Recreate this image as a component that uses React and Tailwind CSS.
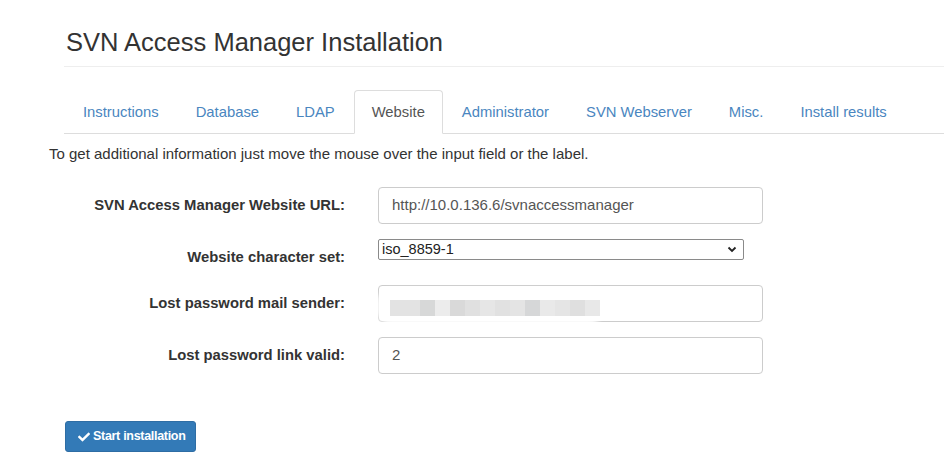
import React from "react";
import { FaCheck } from "react-icons/fa";

const tabs = ["Instructions", "Database", "LDAP", "Website", "Administrator", "SVN Webserver", "Misc.", "Install results"];

const blurBlocks = [
  ["w-[30px]", "bg-[#e3e3e3]"],
  ["w-[15px]", "bg-[#d7d8d8]"],
  ["w-[15px]", "bg-[#ececec]"],
  ["w-[15px]", "bg-[#d9d9d9]"],
  ["w-[15px]", "bg-[#e0e0e0]"],
  ["w-[15px]", "bg-[#e6e6e6]"],
  ["w-[15px]", "bg-[#e1e1e1]"],
  ["w-[15px]", "bg-[#e4e4e4]"],
  ["w-[15px]", "bg-[#d6d7d8]"],
  ["w-[15px]", "bg-[#e9e9e9]"],
  ["w-[15px]", "bg-[#e5e5e5]"],
  ["w-[15px]", "bg-[#dfdfdf]"],
  ["w-[15px]", "bg-[#e8e8e8]"],
];

function Label({ children }) {
  return (
    <div className="w-[345px] h-[37px] flex items-center justify-end text-[14.8px] font-bold text-[#333]">
      {children}
    </div>
  );
}

export default function App() {
  return (
    <div className="w-[944px] h-[475px] bg-white overflow-hidden text-[#333]" style={{ fontFamily: '"Liberation Sans", Arial, sans-serif' }}>
      <div className="pl-[64px] pt-[27px]">
        <h1 className="pl-[2px] text-[25.5px] leading-[30px] text-[#333] font-normal">SVN Access Manager Installation</h1>
        <div className="mt-[9px] h-px bg-[#eeeeee]" />
        <div className="mt-[23px] flex border-b border-[#dddddd] h-[44px]">
          {tabs.map((t) => (
            <div
              key={t}
              className={
                t === "Website"
                  ? "h-[44px] px-[17px] ml-[1px] pt-[1px] flex items-center text-[14.8px] text-[#555] bg-white border border-[#dddddd] border-b-white rounded-t-[4px]"
                  : "h-[43px] px-[18px] ml-[1px] pt-[2px] flex items-center text-[14.8px] text-[#4a86c0]"
              }
            >
              {t}
            </div>
          ))}
        </div>
      </div>
      <div className="pl-[49px] mt-[10px] text-[15px] leading-[20px] text-[#333]">
        To get additional information just move the mouse over the input field or the label.
      </div>

      <div className="mt-[23px] flex flex-col">
        <div className="flex">
          <Label>SVN Access Manager Website URL:</Label>
          <div className="ml-[33px] w-[385px] h-[37px] border border-[#cccccc] rounded-[4px] flex items-center pl-[13px] text-[15px] text-[#555]">
            http://10.0.136.6/svnaccessmanager
          </div>
        </div>

        <div className="flex mt-[15px]">
          <Label>Website character set:</Label>
          <div className="ml-[33px] w-[366px] h-[21px] border border-[#8a8a8a] rounded-[2px] flex items-center justify-between pl-[3px] pr-[6px] text-[14.5px] text-[#222]">
            <span>iso_8859-1</span>
            <svg width="10" height="7" viewBox="0 0 10 7">
              <path d="M1.5 1.5 L5 5 L8.5 1.5" fill="none" stroke="#222" strokeWidth="1.8" />
            </svg>
          </div>
        </div>

        <div className="flex mt-[9px]">
          <Label>Lost password mail sender:</Label>
          <div className="relative ml-[33px] w-[385px] h-[37px] border border-[#cccccc] rounded-[4px]">
            <div className="absolute left-[-2px] top-[3px] w-[226px] h-[35px] bg-white rounded-[14px] blur-[2px]" />
            <div className="absolute left-[11px] top-[14px] flex blur-[0.6px]">
              {blurBlocks.map(([w, c], i) => (
                <div key={i} className={`${w} h-[16px] ${c}`} />
              ))}
            </div>
          </div>
        </div>

        <div className="flex mt-[15px]">
          <Label>Lost password link valid:</Label>
          <div className="ml-[33px] w-[385px] h-[37px] border border-[#cccccc] rounded-[4px] flex items-center pl-[13px] text-[15px] text-[#555]">
            2
          </div>
        </div>
      </div>

      <div className="pl-[65px] mt-[47px]">
        <button className="h-[31px] w-[131px] bg-[#337ab7] border border-[#2e6da4] rounded-[3px] flex items-center pl-[12px] text-white text-[12.5px] font-bold tracking-[-0.3px]">
          <FaCheck className="w-[12px] h-[12px] mr-[3px]" />
          Start installation
        </button>
      </div>
    </div>
  );
}
